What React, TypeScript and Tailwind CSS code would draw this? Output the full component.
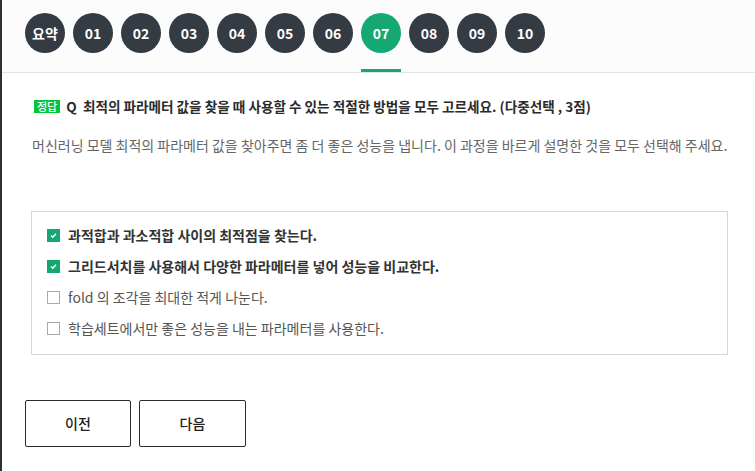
import React from "react";

const tabs = ["요약", "01", "02", "03", "04", "05", "06", "07", "08", "09", "10"];
const options = [
  { text: "과적합과 과소적합 사이의 최적점을 찾는다.", checked: true },
  { text: "그리드서치를 사용해서 다양한 파라메터를 넣어 성능을 비교한다.", checked: true },
  { text: "fold 의 조각을 최대한 적게 나눈다.", checked: false },
  { text: "학습세트에서만 좋은 성능을 내는 파라메터를 사용한다.", checked: false },
];

export default function App() {
  return (
    <div
      className="w-[755px] h-[471px] bg-white border-l-2 border-[#2b3036] overflow-hidden"
      style={{ fontFamily: '"Noto Sans CJK KR", "Noto Sans", sans-serif' }}
    >
      <div className="h-[73px] bg-[#fcfcfc] border-b border-[#e3e3e3] flex pl-[23px] gap-2">
        {tabs.map((t) => {
          const active = t === "07";
          return (
            <div key={t} className="flex flex-col items-center w-10">
              <div
                className={`mt-[13px] w-10 h-10 rounded-full flex items-center justify-center text-white text-[14px] font-bold ${
                  active ? "bg-[#15a873]" : "bg-[#343b42]"
                }`}
              >
                {t}
              </div>
              {active && <div className="mt-auto w-10 h-[3px] bg-[#15a873]" />}
            </div>
          );
        })}
      </div>
      <div className="pl-[30px] pr-[27px]">
        <div className="mt-[23px] flex items-center h-[20px]">
          <span className="ml-[2px] bg-[#00c73c] text-white text-[11px] leading-[13px] px-[3px] mr-[6px] font-medium">
            정답
          </span>
          <span className="text-[13.6px] font-bold text-[#2b2b2b]">
            Q&nbsp;&nbsp;최적의 파라메터 값을 찾을 때 사용할 수 있는 적절한 방법을 모두 고르세요. (다중선택 , 3점)
          </span>
        </div>
        <div className="mt-[19px] text-[14px] text-[#666] leading-[20px] whitespace-nowrap">
          머신러닝 모델 최적의 파라메터 값을 찾아주면 좀 더 좋은 성능을 냅니다. 이 과정을 바르게 설명한 것을 모두 선택해 주세요.
        </div>
        <div className="mt-[56px] ml-[-1px] w-[697px] h-[144px] border border-[#d6d6d6] pt-[13px] pl-[15px] flex flex-col gap-[11px]">
          {options.map((o) => (
            <div key={o.text} className="flex items-center h-[20px]">
              {o.checked ? (
                <div className="w-[13px] h-[13px] bg-[#15a873] flex items-center justify-center">
                  <svg width="9" height="9" viewBox="0 0 9 9">
                    <path d="M2 4.6 L3.8 6.3 L7 2.8" stroke="white" strokeWidth="1.4" fill="none" />
                  </svg>
                </div>
              ) : (
                <div className="w-[13px] h-[13px] border border-[#a9a9a9] bg-white" />
              )}
              <span
                className={`ml-[8px] text-[14px] ${
                  o.checked ? "font-bold text-[#333]" : "text-[#555]"
                }`}
              >
                {o.text}
              </span>
            </div>
          ))}
        </div>
      </div>
      <div className="mt-[45px] pl-[23px] flex gap-2">
        <button className="w-[106px] h-[47px] border border-[#2b2b2b] rounded-[2px] text-[14px] font-medium text-[#222] bg-white">
          이전
        </button>
        <button className="w-[107px] h-[47px] border border-[#2b2b2b] rounded-[2px] text-[14px] font-medium text-[#222] bg-white">
          다음
        </button>
      </div>
    </div>
  );
}
